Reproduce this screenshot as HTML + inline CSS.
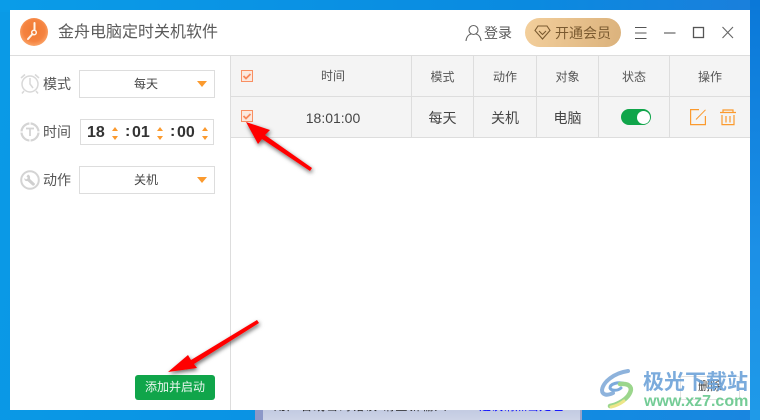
<!DOCTYPE html>
<html lang="zh"><head><meta charset="utf-8">
<style>
*{box-sizing:border-box;margin:0;padding:0}
html,body{width:760px;height:420px;overflow:hidden}
body{position:relative;background:linear-gradient(100deg,#0a9ae6 0%,#0a8fe2 60%,#1a86e0 100%);font-family:"Liberation Sans","Noto Sans CJK SC",sans-serif;color:#444}
.a{position:absolute}
.t{position:absolute;white-space:nowrap;text-align:center}
.sel{position:absolute;left:79px;width:136px;height:28px;border:1px solid #ddd;background:#fff;font-size:12px;line-height:27px;text-align:center;padding-right:2px;color:#444}
.sel i{position:absolute;left:117px;top:10px;width:0;height:0;border-left:5px solid transparent;border-right:5px solid transparent;border-top:6px solid #fb9a2e}
.up,.dn{position:absolute;width:0;height:0;border-left:3px solid transparent;border-right:3px solid transparent}
.up{border-bottom:4px solid #fb9a2e}.dn{border-top:4px solid #fb9a2e}
.num{position:absolute;font-size:16px;font-weight:bold;color:#333;line-height:20px;white-space:nowrap}
.ln{position:absolute;background:#ddd}
.cb{position:absolute;left:241px;width:12px;height:12px;border:1px solid #f98f62;background:#fbe9df}
</style></head><body>
<div class="a" style="left:0;top:0;width:760px;height:12px;background:linear-gradient(90deg,#0a9ce8,#0a8ae0 70%,#1b7fdc)"></div>
<div class="a" style="left:750px;top:0;width:10px;height:420px;background:linear-gradient(180deg,#0a78d8,#1c90e6 60%,#1f9ae8)"></div>
<div class="a" style="left:255px;top:410px;width:327px;height:10px;background:linear-gradient(180deg,#c3cbe2,#ccd3e6);border-left:8px solid #8c98c8;border-right:2px solid #99a3c8"></div>
<div class="t" style="left:274px;top:397px;font-size:12px;color:#222;letter-spacing:1px">用户名或密码错误 请重新输入</div>
<div class="t" style="left:459px;top:397px;font-size:12px;color:#00f">360建议请点击处理</div>
<div class="a" style="left:10px;top:10px;width:740px;height:400px;background:#fff"></div>

<!-- logo -->
<svg class="a" style="left:20px;top:18px" width="28" height="28" viewBox="0 0 28 28">
<defs><radialGradient id="g" cx=".5" cy=".45" r=".55"><stop offset="0" stop-color="#f07a32"/><stop offset=".7" stop-color="#f58340"/><stop offset="1" stop-color="#fba468"/></radialGradient></defs>
<circle cx="14" cy="14" r="14" fill="url(#g)"/>
<path d="M14.500 5V12M12.500 16L8 21" stroke="#fff3e8" stroke-width="2" fill="none" stroke-linecap="round"/>
<circle cx="14" cy="14.500" r="2.300" fill="none" stroke="#fff3e8" stroke-width="1.500"/></svg>
<div class="t" style="left:58px;top:23px;font-size:16px;line-height:20px;color:#5a5a5a;width:160px;text-align:left">金舟电脑定时关机软件</div>

<!-- title right -->
<svg class="a" style="left:465px;top:24px" width="18" height="18" viewBox="0 0 18 18" fill="none" stroke="#666" stroke-width="1.100"><circle cx="8.500" cy="6" r="4.500"/><path d="M1 17C1.500 12.500 4 10.500 6 10M16 17C15.500 12.500 13 10.500 11 10"/></svg>
<div class="t" style="left:484px;top:24px;font-size:14px;line-height:18px;color:#5a5a5a">登录</div>
<div class="a" style="left:525px;top:18px;width:96px;height:29px;border-radius:15px;background:linear-gradient(100deg,#f3cf9c,#dbb27c)"></div>
<svg class="a" style="left:534px;top:25px" width="17" height="15" viewBox="0 0 17 15" fill="none" stroke="#7a5a30" stroke-width="1.100"><path d="M4 1H13L16 5.500L8.500 14L1 5.500Z"/><path d="M5 6L8.500 9.500L12 6"/></svg>
<div class="t" style="left:555px;top:24px;font-size:14px;line-height:18px;color:#7a5a30">开通会员</div>
<svg class="a" style="left:630px;top:24px" width="120" height="18" viewBox="0 0 120 18" fill="none" stroke="#555" stroke-width="1.100">
<path d="M5 3.500H16.500M5 9H16.500M5 14.500H16.500"/><path d="M34 9H45.500"/><rect x="63.500" y="3.500" width="10" height="10" stroke-width="1.300"/><path d="M92.500 3L103 14M103 3L92.500 14" stroke="#666"/></svg>
<div class="ln" style="left:10px;top:55px;width:740px;height:1px"></div>
<div class="ln" style="left:230px;top:56px;width:1px;height:354px"></div>

<!-- left panel -->
<svg class="a" style="left:20px;top:73px" width="20" height="22" viewBox="0 0 20 22" fill="none" stroke="#d8d8d8" stroke-width="1.500"><circle cx="10" cy="11" r="8"/><path d="M10 5V11L13 15M1 5L5 1.500M19 5L15 1.500M4 18L2 20.500M16 18L18 20.500"/></svg>
<div class="t" style="left:43px;top:75px;font-size:14px;line-height:18px;color:#555">模式</div>
<div class="sel" style="top:70px">每天<i></i></div>

<svg class="a" style="left:20px;top:122px" width="20" height="20" viewBox="0 0 20 20" fill="none" stroke="#d4d4d4" stroke-width="2.200"><circle cx="10" cy="10" r="8.500"/><path d="M6 6.500H14M10 6.500V14" stroke-width="1.800"/><path d="M10 0V3M10 17V20M0 10H3M17 10H20" stroke="#fff" stroke-width="1.200"/></svg>
<div class="t" style="left:43px;top:123px;font-size:14px;line-height:18px;color:#555">时间</div>
<div class="a" style="left:80px;top:119px;width:134px;height:26px;border:1px solid #ddd"></div>
<div class="num" style="left:87px;top:123px">18</div>
<div class="up" style="left:112px;top:127px"></div><div class="dn" style="left:112px;top:136px"></div>
<div class="num" style="left:125px;top:122px">:</div><div class="num" style="left:132px;top:123px">01</div>
<div class="up" style="left:157px;top:127px"></div><div class="dn" style="left:157px;top:136px"></div>
<div class="num" style="left:170px;top:122px">:</div><div class="num" style="left:177px;top:123px">00</div>
<div class="up" style="left:202px;top:127px"></div><div class="dn" style="left:202px;top:136px"></div>

<svg class="a" style="left:20px;top:170px" width="20" height="20" viewBox="0 0 20 20" fill="none"><circle cx="10" cy="10" r="8.800" stroke="#d4d4d4" stroke-width="2"/><path d="M8 4.500L6.500 6.500L8 8L6 9.500L4.500 8C4 10 5.500 11.500 7.500 11L12.500 15.500C13.500 16.300 15.500 14.800 14.800 13.500L10 9C10.500 6.500 9.500 5 8 4.500Z" fill="#cfcfcf"/></svg>
<div class="t" style="left:43px;top:171px;font-size:14px;line-height:18px;color:#555">动作</div>
<div class="sel" style="top:166px">关机<i></i></div>

<div class="t" style="left:135px;top:375px;width:80px;height:25px;border-radius:3px;background:#10a54a;color:#eaf7ef;font-size:12px;line-height:25px">添加并启动</div>

<!-- table -->
<div class="a" style="left:231px;top:56px;width:519px;height:81px;background:#f4f4f4"></div>
<div class="ln" style="left:231px;top:96px;width:519px;height:1px"></div>
<div class="ln" style="left:231px;top:137px;width:519px;height:1px"></div>
<div class="ln" style="left:411px;top:56px;width:1px;height:81px"></div>
<div class="ln" style="left:473px;top:56px;width:1px;height:81px"></div>
<div class="ln" style="left:536px;top:56px;width:1px;height:81px"></div>
<div class="ln" style="left:598px;top:56px;width:1px;height:81px"></div>
<div class="ln" style="left:669px;top:56px;width:1px;height:81px"></div>
<div class="cb" style="top:70px"></div>
<div class="cb" style="top:110px"></div>
<svg class="a" style="left:241px;top:70px" width="12" height="52" viewBox="0 0 12 52" fill="none" stroke="#f9885a" stroke-width="1.800"><path d="M2.500 6L5 8.500L9.500 4M2.500 46L5 48.500L9.500 44"/></svg>
<div class="t" style="left:303px;top:68px;width:60px;font-size:12px;line-height:16px;color:#555">时间</div>
<div class="t" style="left:412px;top:69px;width:61px;font-size:12px;line-height:16px;color:#555">模式</div>
<div class="t" style="left:474px;top:69px;width:62px;font-size:12px;line-height:16px;color:#555">动作</div>
<div class="t" style="left:537px;top:69px;width:61px;font-size:12px;line-height:16px;color:#555">对象</div>
<div class="t" style="left:599px;top:69px;width:70px;font-size:12px;line-height:16px;color:#555">状态</div>
<div class="t" style="left:670px;top:69px;width:80px;font-size:12px;line-height:16px;color:#555">操作</div>
<div class="t" style="left:293px;top:109px;width:80px;font-size:14px;line-height:18px;color:#444">18:01:00</div>
<div class="t" style="left:412px;top:109px;width:61px;font-size:14px;line-height:18px;color:#444">每天</div>
<div class="t" style="left:474px;top:109px;width:62px;font-size:14px;line-height:18px;color:#444">关机</div>
<div class="t" style="left:537px;top:109px;width:61px;font-size:14px;line-height:18px;color:#444">电脑</div>
<div class="a" style="left:621px;top:109px;width:30px;height:16px;border-radius:8px;background:#10a54a"></div>
<div class="a" style="left:637px;top:111px;width:13px;height:13px;border-radius:50%;background:#fff"></div>
<svg class="a" style="left:690px;top:109px" width="48" height="17" viewBox="0 0 48 17" fill="none" stroke="#fb9a2e" stroke-width="1.200"><path d="M9 .6H.6V15.600H15.400V7"/><path d="M6 10.500L15.500 .8" stroke-width="1"/><path d="M30 3.500H46M33 3.500V1H43V3.500M32 6V15.600H44V6M36 7V13.500M40 7V13.500"/></svg>

<!-- delete + watermark -->
<div class="a" style="left:680px;top:376px;width:60px;height:24px;border:1px solid #e2e2e2;border-radius:2px"></div>
<div class="t" style="left:698px;top:378px;font-size:12px;line-height:16px;color:#444">删除</div>
<svg class="a" style="left:600px;top:368px" width="45" height="42" viewBox="0 0 45 42" fill="none" stroke-linecap="round">
<path d="M28 3C14 5 3 14 2 22C2 27 7 28 13 25" stroke="#8eb3dc" stroke-width="4"/>
<path d="M26 16C18 13 10 16 10 20C11 23 18 23 21 20" stroke="#7dabdc" stroke-width="3"/>
<path d="M20 16C30 15 34 20 28 28C24 33 16 37 10 38" stroke="#9bd68c" stroke-width="4.500"/>
<path d="M24 33C20 36 16 38 11 39" stroke="#ece688" stroke-width="3"/></svg>
<div class="t" style="left:643px;top:371px;font-size:21px;font-weight:bold;line-height:24px;color:#6da3d9;opacity:.9">极光下载站</div>
<div class="t" style="left:644px;top:394px;font-size:16px;font-weight:bold;line-height:16px;color:#74cc96">www.xz7.com</div>

<!-- red arrows -->
<svg class="a" style="left:0;top:0" width="760" height="420" viewBox="0 0 760 420">
<defs><filter id="s" x="-30%" y="-30%" width="160%" height="160%"><feDropShadow dx="1" dy="2" stdDeviation="2" flood-color="#000" flood-opacity=".6"/></filter></defs>
<g filter="url(#s)" fill="#f00"><path d="M246 122L270 130L265 135L312 168L310 171L262 139L258 144Z"/>
<path d="M168 372L188 355L191 360L257 320L259 323L194 364L197 368Z"/></g></svg>
</body></html>
